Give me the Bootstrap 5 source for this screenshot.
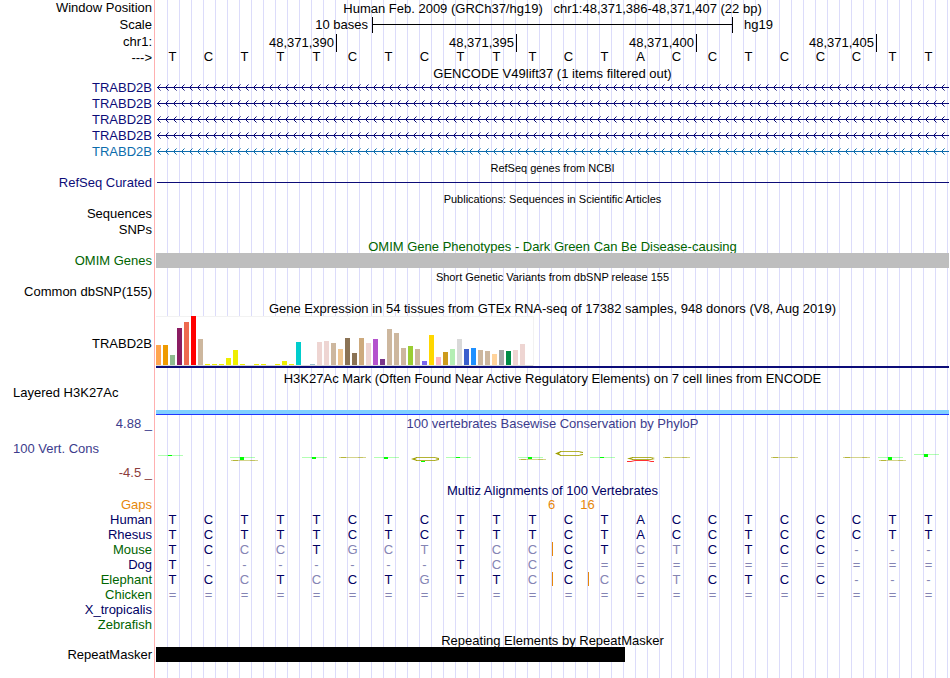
<!DOCTYPE html>
<html lang="en">
<head>
<meta charset="utf-8">
<meta name="viewport" content="width=device-width, initial-scale=1">
<title>Genome Browser chr1:48,371,386-48,371,407</title>
<link href="https://cdn.jsdelivr.net/npm/bootstrap@5.3.0/dist/css/bootstrap.min.css" rel="stylesheet">
<style>
  body { font-family: "Liberation Sans", Arial, sans-serif; font-size: 13px; line-height: 16px; color: #000; background: #fff; }
  .sheet { position: relative; z-index: 0; margin-right: 1px; min-height: 100vh; }
  .guides { position: absolute; z-index: -1; top: 0; bottom: 0; left: 154px; right: 0; display: flex; padding-right: 1px; border-left: 1px solid #ffb0b0; }
  .guides::before { content: ""; flex: 0 0 1px; }
  .guides > i { flex: 1 1 0; border-right: 1px solid #dcdcfa; }
  .track { display: flex; height: 16px; white-space: nowrap; }
  .h14 { height: 14px; }
  .h15 { height: 15px; line-height: 15px; }
  .h18 { height: 18px; line-height: 18px; }
  .tlabel { flex: 0 0 156px; padding-right: 4px; text-align: right; }
  .tlabel.wide { text-align: left; padding-left: 13px; }
  .tdata { flex: 1 1 0; min-width: 0; }
  .ttitle { text-align: center; line-height: 17px; }
  .genes .tlabel { line-height: 18px; }
  .fine { font-size: 11px; line-height: 18px; }
  .navy { color: #0c0c78; }
  .ink { color: #000064; }
  .sky { color: #0c6cac; }
  .leaf { color: #006400; }
  .cons { color: #3c3c8c; }
  .rust { color: #8c3c3c; }
  .amber { color: #e6870a; }
  .tdata svg { display: block; width: 100%; }
  .scale-grid { display: grid; grid-template-columns: 6fr 10fr 6fr; margin-right: 1px; line-height: 18px; }
  .ruler { height: 16px; margin: 1px -1px 0 0; border: solid #000; border-width: 0 1px; }
  .ruler::before { content: ""; display: block; height: 8px; border-bottom: 1px solid #000; }
  .coord-grid { display: grid; grid-template-columns: 5fr 5fr 5fr 5fr 2fr; margin-right: 1px; height: 14px; line-height: 18px; text-align: right; }
  .coord-grid > div { padding-right: 2px; }
  .coord-grid > div + div { border-left: 1px solid #000; }
  .base-grid { display: grid; grid-template-columns: repeat(22, 1fr); margin-right: 1px; text-align: center; line-height: 14px; }
  .base-grid > span { padding-right: 3px; }
  .gap-grid { display: grid; grid-template-columns: 21fr 2fr 2fr 19fr; margin-right: 2px; text-align: center; }
  .omim { background: #bebebe; }
  .gtex { height: 54px; }
  .gtex .tlabel { line-height: 55px; }
  .gtex-axis { height: 52px; border-bottom: 2px solid #0c0c78; }
  .gtex-plot { width: 378px; height: 50px; background: #fff; border: solid #f2f2f2; border-width: 1px 1px 0 0; box-shadow: inset 0 -1px #d8d8d8; padding-bottom: 1px; }
  .gtex-plot > i { width: 5px; margin-right: 2px; flex: none; }
  .h3k { height: 29px; }
  .h3k .tlabel { line-height: 14px; }
  .h3k-band { height: 5px; background: #80d0ff; border-bottom: 1px solid #2038ff; }
  .phylo { height: 67px; }
  .align-table { table-layout: fixed; width: calc(100% - 1px); border-collapse: collapse; line-height: 15px; }
  .align-table th { width: 156px; font-weight: 400; text-align: right; padding: 0 4px 0 0; height: 15px; }
  .align-table td { text-align: center; padding: 0 3px 0 0; color: #000064; height: 15px; }
  .align-table td.diff { color: #8484b4; }
  .align-table td.gap { background: linear-gradient(#e6870a, #e6870a) 0 0 / 1px 14px no-repeat; }
  .mask { width: 59.2%; background: #000; }
</style>
</head>
<body>
<main class="sheet">
  <div class="guides" id="guides" aria-hidden="true"></div>
  <div class="track"><div class="tlabel">Window Position</div><div class="tdata ttitle">Human Feb. 2009 (GRCh37/hg19) &nbsp; chr1:48,371,386-48,371,407 (22 bp)</div></div>
  <div class="track h18"><div class="tlabel">Scale</div>
    <div class="tdata scale-grid"><div class="text-end pe-1">10 bases</div><div class="ruler"></div><div class="ps-2 ms-1">hg19</div></div>
  </div>
  <div class="track"><div class="tlabel">chr1:</div>
    <div class="tdata coord-grid"><div>48,371,390</div><div>48,371,395</div><div>48,371,400</div><div>48,371,405</div><div></div></div>
  </div>
  <div class="track h15"><div class="tlabel">---&gt;</div><div class="tdata base-grid" id="bases"></div></div>
  <div class="track h14"><div class="tlabel"></div><div class="tdata ttitle">GENCODE V49lift37 (1 items filtered out)</div></div>

  <section id="genes" class="genes"></section>

  <div class="track"><div class="tlabel"></div><div class="tdata ttitle fine">RefSeq genes from NCBI</div></div>
  <div class="track h15 navy"><div class="tlabel">RefSeq Curated</div><div class="tdata"><svg height="15"><rect x="1" y="7" width="100%" height="1" fill="#0c0c78"/></svg></div></div>
  <div class="track"><div class="tlabel"></div><div class="tdata ttitle fine">Publications: Sequences in Scientific Articles</div></div>
  <div class="track"><div class="tlabel">Sequences</div></div>
  <div class="track"><div class="tlabel">SNPs</div></div>
  <div class="track h15 leaf"><div class="tlabel"></div><div class="tdata ttitle">OMIM Gene Phenotypes - Dark Green Can Be Disease-causing</div></div>
  <div class="track h15 leaf"><div class="tlabel">OMIM Genes</div><div class="tdata omim"></div></div>
  <div class="track"><div class="tlabel"></div><div class="tdata ttitle fine">Short Genetic Variants from dbSNP release 155</div></div>
  <div class="track"><div class="tlabel">Common dbSNP(155)</div></div>
  <div class="track"><div class="tlabel"></div><div class="tdata ttitle">Gene Expression in 54 tissues from GTEx RNA-seq of 17382 samples, 948 donors (V8, Aug 2019)</div></div>
  <div class="track gtex"><div class="tlabel">TRABD2B</div>
    <div class="tdata"><div class="gtex-axis"><div class="gtex-plot d-flex align-items-end" id="gtex"></div></div></div>
  </div>
  <div class="track"><div class="tlabel"></div><div class="tdata ttitle">H3K27Ac Mark (Often Found Near Active Regulatory Elements) on 7 cell lines from ENCODE</div></div>
  <div class="track h3k"><div class="tlabel wide">Layered H3K27Ac</div><div class="tdata align-self-end h3k-band"></div></div>

  <div class="track phylo cons">
    <div class="tlabel wide d-flex flex-column justify-content-between">
      <div class="h18 text-end">4.88 _</div><div>100 Vert. Cons</div><div class="h18 rust text-end">-4.5 _</div>
    </div>
    <div class="tdata">
      <div class="h18 ttitle">100 vertebrates Basewise Conservation by PhyloP</div>
      <svg id="phylop" height="49" viewBox="0 0 793 49" preserveAspectRatio="none"></svg>
    </div>
  </div>

  <div class="track h15 ink"><div class="tlabel"></div><div class="tdata ttitle">Multiz Alignments of 100 Vertebrates</div></div>
  <div class="track h15 amber"><div class="tlabel">Gaps</div><div class="tdata gap-grid"><span></span><span>6</span><span>16</span></div></div>
  <table class="align-table"><tbody id="align"></tbody></table>
  <div class="track h15"><div class="tlabel"></div><div class="tdata ttitle">Repeating Elements by RepeatMasker</div></div>
  <div class="track h15"><div class="tlabel">RepeatMasker</div><div class="tdata"><div class="mask h15"></div></div></div>
</main>

<script>
  const byId = id => document.getElementById(id);
  const human = "TCTTTCTCTTTCTACCTCCCTT";
  byId("guides").innerHTML = "<i></i>".repeat(66);
  byId("bases").innerHTML = [...human].map(b => `<span>${b}</span>`).join("");

  // Gene models: intron line with strand arrows every 8px
  byId("genes").innerHTML = ["#0c0c78", "#0c0c78", "#0c0c78", "#0c0c78", "#0c6cac"].map((c, i) => `
    <div class="track ${i < 4 ? "navy" : "sky"}"><div class="tlabel">TRABD2B</div><div class="tdata">
      <svg height="16" shape-rendering="crispEdges"><defs><pattern id="strand${i}" width="8" height="16" patternUnits="userSpaceOnUse">
        <path fill="${c}" d="M1 8h1v1h-1zM2 7h1v1h-1zM2 9h1v1h-1zM3 6h1v1h-1zM3 10h1v1h-1z"/>
        <path fill="${c}" fill-opacity=".55" d="M4 5h1v1h-1zM4 11h1v1h-1z"/></pattern></defs>
        <rect x="1" y="8" width="100%" height="1" fill="${c}"/><rect width="100%" height="16" fill="url(#strand${i})"/></svg>
    </div></div>`).join("");

  // Tissue expression: [height, colour]
  const tan = "#cdb79e", yel = "#eeee00", rose = "#eed5d2", brn = "#8b7355";
  const tissues = [[20,"#ffa54f"],[20,"#ee9a00"],[10,"#8fbc8f"],[37,"#8b1c62"],[43,"#ee6a50"],[49,"#ff0000"],[26,tan],
    [1,yel],[1,yel],[1,yel],[7,yel],[15,yel],[1,yel],[0,yel],[1,yel],[1,yel],[0,yel],[1,yel],[4,yel],[1,yel],
    [23,"#00cdcd"],[0,tan],[1,"#9ac0cd"],[23,rose],[24,rose],[22,tan],[16,"#eec591"],[27,brn],[12,brn],[27,"#cdaa7d"],
    [22,rose],[26,"#b452cd"],[6,"#7a378b"],[36,tan],[32,tan],[17,tan],[19,"#9acd32"],[16,tan],[4,"#7a67ee"],[30,"#ffd700"],
    [8,"#ffb6c1"],[13,"#cd9b1d"],[16,"#b4eeb4"],[26,"#d9d9d9"],[16,"#3a5fcd"],[17,"#1e90ff"],[15,tan],[14,tan],
    [11,"#ffd39b"],[15,"#a6a6a6"],[14,"#008b45"],[15,rose],[21,rose],[0,rose]];
  byId("gtex").innerHTML = tissues.map(([h, c]) => `<i style="height:${h}px;background:${c}"></i>`).join("");

  // Conservation glyphs, by base column
  const T = (n, y, h) => { const x = n * 36; return `<rect x="${x + 2}" y="${y}" width="25" height="1" fill="#00ff00" opacity=".3"/><rect x="${x + 12}" y="${y}" width="4" height="${h}" fill="#00ff00"/>`; };
  const L = (n, y) => { const x = n * 36; return `<rect x="${x + 3}" y="${y}" width="27" height="1" fill="#a0a000" opacity=".45"/><rect x="${x + 5}" y="${y}" width="5" height="1" fill="#a0a000" opacity=".6"/><rect x="${x + 22}" y="${y}" width="5" height="1" fill="#a0a000" opacity=".3"/>`; };
  const C = (n, y, h) => { const x = n * 36, m = y + h / 2, b = y + h; return `<g fill="#a0a000"><rect x="${x + 8}" y="${y}" width="19" height="1" opacity=".8"/><rect x="${x + 8}" y="${b - 1}" width="19" height="1" opacity=".8"/><path d="M${x + 3} ${m}L${x + 9} ${y}V${y + 1}L${x + 7} ${m}L${x + 9} ${b - 1}V${b}Z"/><path d="M${x + 26} ${y}L${x + 31} ${y + 1}V${y + 2}L${x + 28} ${y + 1.5}ZM${x + 26} ${b}L${x + 31} ${b - 1}V${b - 2}L${x + 28} ${b - 1.5}Z"/></g>`; };
  byId("phylop").innerHTML =
    T(0, 22, 1) + T(2, 24, 3) + L(2, 27) + T(4, 24, 2) + L(5, 24) + T(6, 24, 2) + C(7, 24, 4) +
    `<rect x="265" y="28" width="4" height="1" fill="#00ff00"/>` + T(8, 24, 1) + T(10, 24, 2) + L(10, 26) +
    C(11, 18, 5) + T(12, 24, 1) + C(13, 24, 3) +
    `<path d="M471 28.5h4l4-1h13l3 1h3" fill="none" stroke="#ff3030"/>` +
    L(14, 24) + L(17, 24) + L(19, 24) + T(20, 24, 3) + L(20, 27) + T(21, 21, 3);

  // Alignment rows: bases that differ from human are dimmed
  const rows = [["Human","ink",human],["Rhesus","ink",human],
    ["Mouse","leaf","TCCCTGCTTCCCTCTCTCC---",[11]],
    ["Dog","ink","T-------TCCC=========="],
    ["Elephant","leaf","TCCTCCTGTTCCCCTCTCC---",[11,12]],
    ["Chicken","leaf","=".repeat(22)],["X_tropicalis","ink",""],["Zebrafish","leaf",""]];
  byId("align").innerHTML = rows.map(([name, cls, seq, gaps = []]) =>
    `<tr><th scope="row" class="${cls}">${name}</th>` + [...seq.padEnd(22)].map((b, i) =>
      `<td class="${b === human[i] ? "" : "diff"} ${gaps.includes(i) ? "gap" : ""}">${b}</td>`).join("") + "</tr>").join("");
</script>
<script src="https://cdn.jsdelivr.net/npm/bootstrap@5.3.0/dist/js/bootstrap.bundle.min.js"></script>
</body>
</html>
